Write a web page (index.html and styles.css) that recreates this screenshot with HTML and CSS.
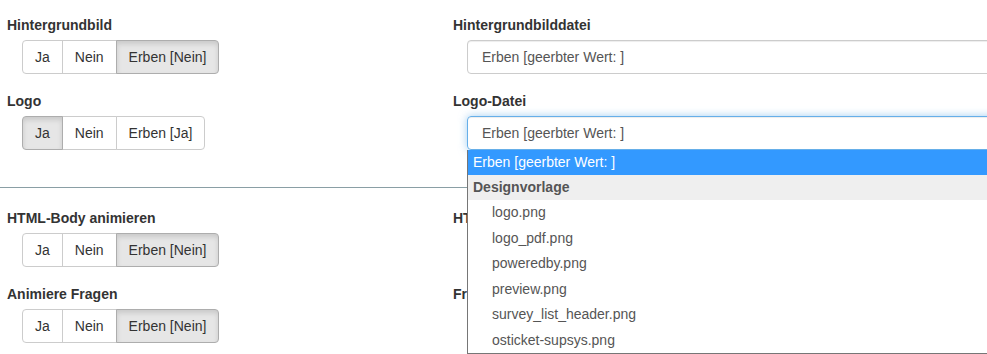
FILE: index.html
```html
<!DOCTYPE html>
<html lang="de">
<head>
  <meta charset="UTF-8" />
  <title>Designvorlagen-Optionen</title>
  <link rel="stylesheet" href="styles.css">
</head>
<body>
  <div class="page">
    <!-- Hintergrund -->
    <div class="row">
      <div class="field">
        <label class="field-label">Hintergrundbild</label>
        <div class="btn-group">
          <button class="btn">Ja</button>
          <button class="btn">Nein</button>
          <button class="btn active">Erben [Nein]</button>
        </div>
      </div>
      <div class="field">
        <label class="field-label">Hintergrundbilddatei</label>
        <div class="select">Erben [geerbter Wert: ]</div>
      </div>
    </div>

    <!-- Logo -->
    <div class="row">
      <div class="field">
        <label class="field-label">Logo</label>
        <div class="btn-group">
          <button class="btn active">Ja</button>
          <button class="btn">Nein</button>
          <button class="btn">Erben [Ja]</button>
        </div>
      </div>
      <div class="field">
        <label class="field-label">Logo-Datei</label>
        <div class="select-wrap">
          <div class="select focus">Erben [geerbter Wert: ]</div>
          <ul class="dropdown">
            <li class="opt selected">Erben [geerbter Wert: ]</li>
            <li class="optgroup">Designvorlage</li>
            <li class="opt sub">logo.png</li>
            <li class="opt sub">logo_pdf.png</li>
            <li class="opt sub">poweredby.png</li>
            <li class="opt sub">preview.png</li>
            <li class="opt sub">survey_list_header.png</li>
            <li class="opt sub">osticket-supsys.png</li>
          </ul>
        </div>
      </div>
    </div>

    <hr class="divider">

    <!-- Animationen -->
    <div class="row">
      <div class="field">
        <label class="field-label">HTML-Body animieren</label>
        <div class="btn-group">
          <button class="btn">Ja</button>
          <button class="btn">Nein</button>
          <button class="btn active">Erben [Nein]</button>
        </div>
      </div>
      <div class="field">
        <label class="field-label">HTML-Body-Animationstyp</label>
      </div>
    </div>

    <div class="row">
      <div class="field">
        <label class="field-label">Animiere Fragen</label>
        <div class="btn-group">
          <button class="btn">Ja</button>
          <button class="btn">Nein</button>
          <button class="btn active">Erben [Nein]</button>
        </div>
      </div>
      <div class="field">
        <label class="field-label">Fragen-Animationstyp</label>
      </div>
    </div>
  </div>
</body>
</html>
```

FILE: styles.css
```css
html,
body {
  margin: 0;
  overflow: hidden;
  background: #fff;
}

body {
  font-family: 'Liberation Sans', Arial, sans-serif;
  font-size: 14px;
  line-height: 20px;
  color: #333;
}

.page {
  width: 1120px;
  padding-top: 15px;
}

.row {
  display: grid;
  grid-template-columns: 446px 1fr;
  margin-bottom: 17px;
}

.field {
  padding-left: 7px;
}

.field-label {
  display: block;
  font-weight: bold;
  margin-bottom: 5px;
}

/* button groups */
.btn-group {
  display: inline-flex;
  margin-left: 15px;
}

.btn {
  font: inherit;
  color: #333;
  background: #fff;
  border: 1px solid #ccc;
  padding: 6px 12px;
  margin-left: -1px;
  line-height: 20px;
  height: 34px;
}

.btn:first-child {
  margin-left: 0;
  border-radius: 4px 0 0 4px;
}

.btn:last-child {
  border-radius: 0 4px 4px 0;
}

.btn.active {
  background: #e6e6e6;
  border-color: #adadad;
  box-shadow: inset 0 3px 5px rgba(0, 0, 0, 0.125);
  position: relative;
}

/* selects */
.select-wrap {
  position: relative;
  margin-left: 14px;
}

.select {
  margin-left: 14px;
  height: 34px;
  box-sizing: border-box;
  border: 1px solid #ccc;
  border-radius: 4px;
  padding: 6px 14px;
  color: #555;
  box-shadow: inset 0 1px 1px rgba(0, 0, 0, 0.075);
}

.select-wrap .select {
  margin-left: 0;
}

.select.focus {
  border-color: #66afe9;
  box-shadow: inset 0 1px 1px rgba(0, 0, 0, 0.075), 0 0 8px rgba(102, 175, 233, 0.6);
}

.dropdown {
  position: absolute;
  top: 100%;
  left: 0;
  right: 0;
  z-index: 10;
  margin: 0;
  padding: 0;
  list-style: none;
  background: #fff;
  border: 1px solid #767676;
  border-top: none;
  color: #555;
}

.opt,
.optgroup {
  height: 25.5px;
  line-height: 25px;
  padding-left: 5px;
}

.opt.selected {
  background: #3399ff;
  color: #fff;
  height: 25px;
}

.optgroup {
  background: #efefef;
  font-weight: bold;
  height: 25px;
}

.opt.sub {
  padding-left: 24px;
}

.divider {
  border: 0;
  border-top: 1px solid #8a9fa5;
  margin: 37px 0 20px;
  height: 0;
}
```
